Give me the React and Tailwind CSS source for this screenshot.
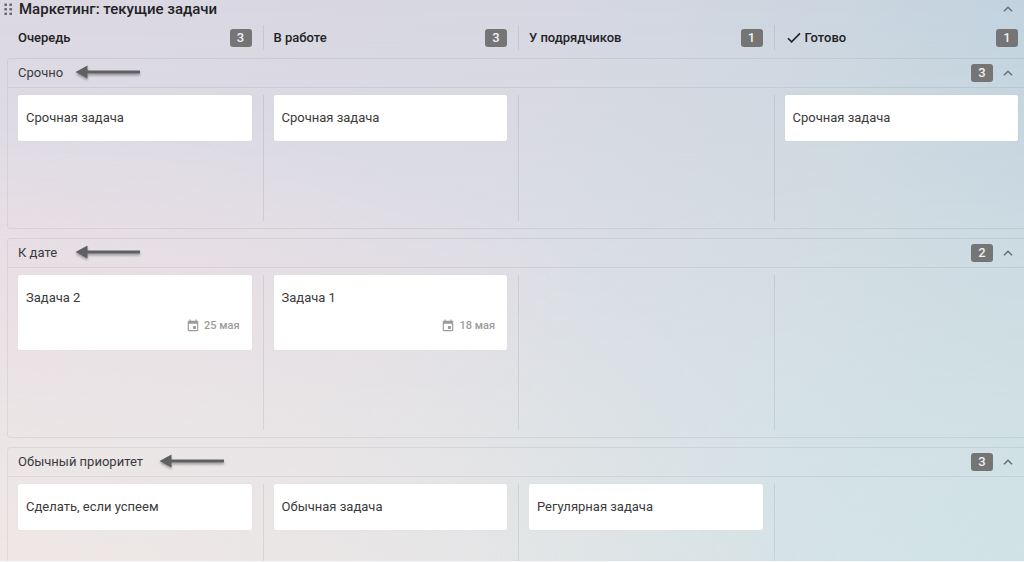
import React, { useState } from "react";
import { MdEvent } from "react-icons/md";

const columns = [
    { title: "Очередь", count: 3 },
    { title: "В работе", count: 3 },
    { title: "У подрядчиков", count: 1 },
    { title: "Готово", count: 1, done: true },
];

const lanes = [
    {
        title: "Срочно",
        count: 3,
        arrowClass: "left-[67px]",
        cells: [
            [{ title: "Срочная задача" }],
            [{ title: "Срочная задача" }],
            [],
            [{ title: "Срочная задача" }],
        ],
    },
    {
        title: "К дате",
        count: 2,
        arrowClass: "left-[67px]",
        cells: [
            [{ title: "Задача 2", date: "25 мая" }],
            [{ title: "Задача 1", date: "18 мая" }],
            [],
            [],
        ],
    },
    {
        title: "Обычный приоритет",
        count: 3,
        arrowClass: "left-[151px]",
        cells: [
            [{ title: "Сделать, если успеем" }],
            [{ title: "Обычная задача" }],
            [{ title: "Регулярная задача" }],
            [],
        ],
    },
];

const Badge = ({ children }) => (
    <span className="flex h-[18px] w-[22px] items-center justify-center rounded-[3px] bg-[#757575] text-[13px] leading-[18px] font-medium text-[#f0f0f0]">
        {children}
    </span>
);

const DragHandle = () => (
    <button type="button" aria-label="Переместить" className="flex w-[9px] cursor-grab justify-center">
        <svg width="9" height="13" viewBox="0 0 9 13" fill="#6b6870">
            <rect x="0.4" y="0.5" width="2.6" height="2.6" rx="0.5" />
            <rect x="5.4" y="0.5" width="2.6" height="2.6" rx="0.5" />
            <rect x="0.4" y="5" width="2.6" height="2.6" rx="0.5" />
            <rect x="5.4" y="5" width="2.6" height="2.6" rx="0.5" />
            <rect x="0.4" y="9.5" width="2.6" height="2.6" rx="0.5" />
            <rect x="5.4" y="9.5" width="2.6" height="2.6" rx="0.5" />
        </svg>
    </button>
);

const CollapseButton = ({ open, onClick }) => (
    <button
        type="button"
        aria-label={open ? "Свернуть" : "Развернуть"}
        aria-expanded={open}
        onClick={onClick}
        className="flex h-[18px] w-[10px] cursor-pointer items-center justify-center"
    >
        <svg width="10" height="6" viewBox="0 0 10 6" fill="none" className={open ? "" : "rotate-180"}>
            <path d="M1 5.2 L5 1.2 L9 5.2" stroke="#66707a" strokeWidth="1.5" />
        </svg>
    </button>
);

const Arrow = ({ className }) => (
    <svg
        className={`absolute top-[5px] drop-shadow-[0_2px_1px_rgba(0,0,0,0.3)] ${className}`}
        width="66"
        height="16"
        viewBox="0 0 66 16"
        fill="#5f6062"
        aria-hidden="true"
    >
        <path d="M0.5 8 L12.5 1.6 V6.6 H65 V9.4 H12.5 V14.4 Z" />
    </svg>
);

const Card = ({ title, date }) => (
    <article className="rounded-[2px] bg-white px-2 py-[13px] text-[#3a3a3a] shadow-[0_0_1px_rgba(0,0,0,0.1)]">
        <h4 className="text-[13px] leading-[20px]">{title}</h4>
        {date && (
            <div className="mt-2 mb-px flex h-[20px] items-center justify-end gap-1 pr-1 text-[11px] font-medium text-[#9b9b9b]">
                <MdEvent size={14} />
                <time>{date}</time>
            </div>
        )}
    </article>
);

const Lane = ({ title, count, arrowClass, cells }) =>
{
    const [open, setOpen] = useState(true);

    return (
        <section className="rounded-[3px] border border-black/6">
            <header className="relative flex h-[29px] items-center border-b border-black/6 pr-[17px] pl-[10px]">
                <h3 className="text-[13px] text-[#3a3a3e]">{title}</h3>
                <Arrow className={arrowClass} />
                <div className="ml-auto flex items-center gap-[10px]">
                    <Badge>{count}</Badge>
                    <CollapseButton open={open} onClick={() => setOpen(!open)} />
                </div>
            </header>
            {open && (
                <div className="grid grid-cols-4 py-[7px]">
                    {cells.map((cards, index) => (
                        <div
                            key={index}
                            className="border-r border-black/8 pr-[11px] pb-20 pl-[10px] last:border-transparent"
                        >
                            {cards.map((card) => (
                                <Card key={card.title} {...card} />
                            ))}
                        </div>
                    ))}
                </div>
            )}
        </section>
    );
};

const App = () =>
{
    const [open, setOpen] = useState(true);

    return (
        <div className="h-screen overflow-hidden border-b border-white/80 bg-[radial-gradient(ellipse_at_0%_100%,rgba(242,232,230,0.75),transparent_55%),radial-gradient(ellipse_at_0%_50%,rgba(236,218,228,0.5),transparent_40%),radial-gradient(ellipse_at_100%_100%,rgba(204,226,230,0.7),transparent_50%),linear-gradient(to_bottom,transparent,rgba(236,238,234,0.6)),linear-gradient(100deg,#dcd8e2,#d6d7e2_50%,#cbd6e0_75%,#bdd1de)] font-['Roboto',sans-serif]">
            <div className="flex h-[18px] items-center gap-[6px] pr-[11px] pl-1">
                <DragHandle />
                <h1 className="text-[15px] leading-[18px] font-medium text-[#222226]">
                    Маркетинг: текущие задачи
                </h1>
                <div className="ml-auto flex">
                    <CollapseButton open={open} onClick={() => setOpen(!open)} />
                </div>
            </div>
            {open && (
                <main className="mt-[7px] -mr-[7px] ml-[7px]">
                    <div className="mb-2 grid grid-cols-4 px-px">
                        {columns.map(({ title, count, done }) => (
                            <div
                                key={title}
                                className="flex h-[25px] items-center border-r border-black/8 pr-[11px] pl-[10px] last:border-transparent"
                            >
                                {done && (
                                    <svg className="mr-1 ml-[2px]" width="14" height="12" viewBox="0 0 14 12" fill="none">
                                        <path d="M1 6.2 L4.6 9.8 L13 1.4" stroke="#222226" strokeWidth="1.6" />
                                    </svg>
                                )}
                                <h2 className="text-[13px] font-medium text-[#222226]">{title}</h2>
                                <div className="ml-auto">
                                    <Badge>{count}</Badge>
                                </div>
                            </div>
                        ))}
                    </div>
                    <div className="flex flex-col gap-[9px]">
                        {lanes.map((lane) => (
                            <Lane key={lane.title} {...lane} />
                        ))}
                    </div>
                </main>
            )}
        </div>
    );
};

export default App;
